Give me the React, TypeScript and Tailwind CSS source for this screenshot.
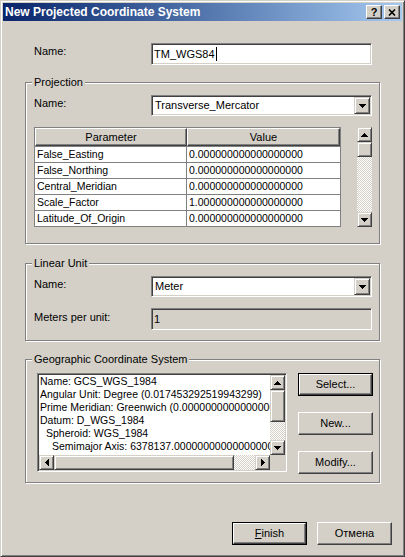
import React from 'react';

// classic 3d frames
const sunken =
  'border border-t-[#808080] border-l-[#808080] border-r-white border-b-white shadow-[inset_1px_1px_0_#404040,inset_-1px_-1px_0_#d4d0c8]';
const raised =
  'border border-t-white border-l-white border-r-[#404040] border-b-[#404040] shadow-[inset_-1px_-1px_0_#808080]';
const scrollBtn =
  'border border-t-[#d4d0c8] border-l-[#d4d0c8] border-r-[#404040] border-b-[#404040] shadow-[inset_1px_1px_0_#fff,inset_-1px_-1px_0_#808080]';
const hatch =
  'bg-[image:repeating-conic-gradient(#fff_0_25%,#d4d0c8_0_50%)] bg-[length:2px_2px]';
const groupBox =
  'ml-[22px] w-[355px] border border-[#808080] shadow-[1px_1px_0_#fff,inset_1px_1px_0_#fff]';

type Dir = 'up' | 'down' | 'left' | 'right';

const Arrow = ({ dir }: { dir: Dir }) => {
  if (dir === 'down')
    return (
      <svg width="7" height="4" viewBox="0 0 7 4" className="block">
        <path d="M0 0h7v1H0zM1 1h5v1H1zM2 2h3v1H2zM3 3h1v1H3z" fill="#000" />
      </svg>
    );
  if (dir === 'up')
    return (
      <svg width="7" height="4" viewBox="0 0 7 4" className="block">
        <path d="M3 0h1v1H3zM2 1h3v1H2zM1 2h5v1H1zM0 3h7v1H0z" fill="#000" />
      </svg>
    );
  if (dir === 'left')
    return (
      <svg width="4" height="7" viewBox="0 0 4 7" className="block">
        <path d="M0 3h1v1H0zM1 2h1v3H1zM2 1h1v5H2zM3 0h1v7H3z" fill="#000" />
      </svg>
    );
  return (
    <svg width="4" height="7" viewBox="0 0 4 7" className="block">
      <path d="M3 3h1v1H3zM2 2h1v3H2zM1 1h1v5H1zM0 0h1v7H0z" fill="#000" />
    </svg>
  );
};

const ArrowBtn = ({ dir }: { dir: Dir }) => (
  <div className={'w-[15px] h-[15px] shrink-0 flex items-center justify-center bg-[#d4d0c8] ' + scrollBtn}>
    <Arrow dir={dir} />
  </div>
);

const Button = ({ label, isDefault }: { label: React.ReactNode; isDefault?: boolean }) => {
  if (isDefault) {
    return (
      <div className="w-[75px] h-[23px] border border-black">
        <div className={'h-full flex items-center justify-center bg-[#d4d0c8] ' + raised}>{label}</div>
      </div>
    );
  }
  return (
    <div className={'w-[75px] h-[23px] flex items-center justify-center bg-[#d4d0c8] ' + raised}>{label}</div>
  );
};

const Combo = ({ value }: { value: string }) => (
  <div className={'w-[221px] h-[21px] p-[1px] flex bg-white ' + sunken}>
    <span className="flex-1 pl-[2px] leading-[17px]">{value}</span>
    <div className={'w-[16px] h-[17px] flex items-center justify-center bg-[#d4d0c8] ' + scrollBtn}>
      <Arrow dir="down" />
    </div>
  </div>
);

const params = [
  ['False_Easting', '0.000000000000000000'],
  ['False_Northing', '0.000000000000000000'],
  ['Central_Meridian', '0.000000000000000000'],
  ['Scale_Factor', '1.000000000000000000'],
  ['Latitude_Of_Origin', '0.000000000000000000'],
];

const gcsLines = [
  { text: 'Name: GCS_WGS_1984', indent: 'pl-0' },
  { text: 'Angular Unit: Degree (0.017453292519943299)', indent: 'pl-0' },
  { text: 'Prime Meridian: Greenwich (0.000000000000000000)', indent: 'pl-0' },
  { text: 'Datum: D_WGS_1984', indent: 'pl-0' },
  { text: 'Spheroid: WGS_1984', indent: 'pl-[6px]' },
  { text: 'Semimajor Axis: 6378137.000000000000000000', indent: 'pl-[12px]' },
];

export default function App() {
  return (
    <div className="w-[405px] h-[557px] bg-[#d4d0c8] text-black text-[11px] font-['Liberation_Sans',Arial,sans-serif] border border-t-[#d4d0c8] border-l-[#d4d0c8] border-r-[#404040] border-b-[#404040] shadow-[inset_1px_1px_0_#fff,inset_-1px_-1px_0_#808080] p-[2px] flex flex-col">
      {/* title bar */}
      <div className="h-[18px] shrink-0 flex items-center pl-[2px] pr-[2px] bg-linear-to-r from-[#0a246a] to-[#a6caf0]">
        <span className="flex-1 text-white font-bold text-[12px] leading-[18px]">New Projected Coordinate System</span>
        <div className={'w-[16px] h-[14px] flex items-center justify-center bg-[#d4d0c8] ' + raised}>
          <span className="font-bold text-[11px] leading-[11px]">?</span>
        </div>
        <div className={'ml-[2px] w-[16px] h-[14px] flex items-center justify-center bg-[#d4d0c8] ' + raised}>
          <svg width="8" height="7" viewBox="0 0 8 7" className="block">
            <path d="M1 0.5L7 6.5M7 0.5L1 6.5" stroke="#000" strokeWidth="1.6" />
          </svg>
        </div>
      </div>

      {/* name */}
      <div className="mt-[22px] ml-[31px] flex">
        <span className="w-[117px] pt-[2px] leading-[13px]">Name:</span>
        <div className={'w-[221px] h-[22px] bg-white flex items-center pl-[2px] ' + sunken}>
          <span>TM_WGS84</span>
          <span className="inline-block w-px h-[14px] bg-black ml-px" />
        </div>
      </div>

      {/* projection */}
      <fieldset className={'mt-[11px] ' + groupBox}>
        <legend className="ml-[6px] px-[2px] leading-[13px] bg-[#d4d0c8]">Projection</legend>
        <div className="pl-[8px] pt-[6px] pb-[16px]">
          <div className="flex">
            <span className="w-[117px] pt-[2px] leading-[13px]">Name:</span>
            <Combo value="Transverse_Mercator" />
          </div>
          <div className="mt-[11px] flex">
            <div className="w-[307px] border border-[#808080] bg-white text-[10.5px]">
              <div className="h-[18px] flex">
                <div className={'w-[152px] flex items-center justify-center bg-[#d4d0c8] text-[11px] ' + raised}>Parameter</div>
                <div className={'flex-1 flex items-center justify-center bg-[#d4d0c8] text-[11px] ' + raised}>Value</div>
              </div>
              {params.map(([name, value]) => (
                <div key={name} className="h-[16px] flex border-t border-[#808080]">
                  <div className="w-[152px] pl-[2px] leading-[15px] border-r border-[#808080]">{name}</div>
                  <div className="flex-1 pl-[2px] leading-[15px]">{value}</div>
                </div>
              ))}
            </div>
            <div className="ml-[16px] w-[15px] h-[100px] flex flex-col">
              <ArrowBtn dir="up" />
              <div className={'h-[15px] bg-[#d4d0c8] ' + scrollBtn} />
              <div className={'flex-1 ' + hatch} />
              <ArrowBtn dir="down" />
            </div>
          </div>
        </div>
      </fieldset>

      {/* linear unit */}
      <fieldset className={'mt-[13px] ' + groupBox}>
        <legend className="ml-[6px] px-[2px] leading-[13px] bg-[#d4d0c8]">Linear Unit</legend>
        <div className="pl-[8px] pt-[6px] pb-[10px]">
          <div className="flex">
            <span className="w-[117px] pt-[2px] leading-[13px]">Name:</span>
            <Combo value="Meter" />
          </div>
          <div className="mt-[11px] flex">
            <span className="w-[117px] pt-[3px] leading-[13px]">Meters per unit:</span>
            <div className={'w-[221px] h-[22px] flex items-center pl-[2px] bg-[#d4d0c8] ' + sunken}>1</div>
          </div>
        </div>
      </fieldset>

      {/* geographic coordinate system */}
      <fieldset className={'mt-[12px] ' + groupBox}>
        <legend className="ml-[6px] px-[2px] leading-[13px] bg-[#d4d0c8]">Geographic Coordinate System</legend>
        <div className="pl-[11px] pt-[7px] pb-[8px] flex">
          <div className={'w-[250px] h-[99px] p-[1px] bg-white flex flex-col ' + sunken}>
            <div className="flex-1 flex min-h-0">
              <div className="flex-1 overflow-hidden whitespace-nowrap text-[10.5px] leading-[13px] pl-[1px]">
                {gcsLines.map((l) => (
                  <div key={l.text} className={l.indent}>{l.text}</div>
                ))}
              </div>
              <div className="w-[15px] flex flex-col">
                <ArrowBtn dir="up" />
                <div className={'h-[32px] bg-[#d4d0c8] ' + scrollBtn} />
                <div className={'flex-1 ' + hatch} />
                <ArrowBtn dir="down" />
              </div>
            </div>
            <div className="h-[15px] flex">
              <ArrowBtn dir="left" />
              <div className={'w-[180px] bg-[#d4d0c8] ' + scrollBtn} />
              <div className={'flex-1 ' + hatch} />
              <ArrowBtn dir="right" />
              <div className="w-[15px] bg-[#d4d0c8]" />
            </div>
          </div>
          <div className="ml-[11px] flex flex-col gap-[16px]">
            <Button label="Select..." isDefault />
            <Button label="New..." />
            <Button label="Modify..." />
          </div>
        </div>
      </fieldset>

      {/* footer */}
      <div className="mt-[39px] pr-[10px] flex justify-end gap-[10px]">
        <Button
          label={
            <span>
              <span className="underline">F</span>inish
            </span>
          }
          isDefault
        />
        <Button label="Отмена" />
      </div>
    </div>
  );
}
